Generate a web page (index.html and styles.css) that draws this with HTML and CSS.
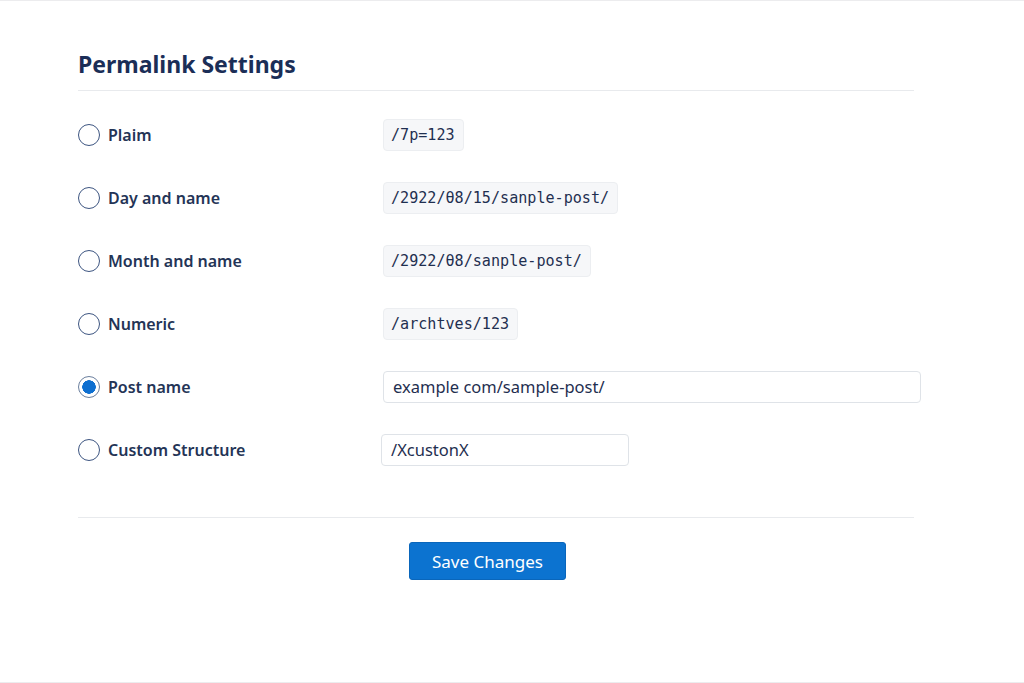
FILE: index.html
```html
<!DOCTYPE html>
<html lang="en">
<head>
  <meta charset="UTF-8" />
  <meta name="viewport" content="width=device-width, initial-scale=1.0"/>
  <title>Permalink Settings</title>
  <link rel="stylesheet" href="styles.css">
</head>
<body>
  <div class="page">
    <h1>Permalink Settings</h1>

    <div class="options">
      <label class="row">
        <span class="opt"><input type="radio" name="structure"> Plaim</span>
        <code>/7p=123</code>
      </label>
      <label class="row">
        <span class="opt"><input type="radio" name="structure"> Day and name</span>
        <code>/2922/θ8/15/sanple-post/</code>
      </label>
      <label class="row">
        <span class="opt"><input type="radio" name="structure"> Month and name</span>
        <code>/2922/θ8/sanple-post/</code>
      </label>
      <label class="row">
        <span class="opt"><input type="radio" name="structure"> Numeric</span>
        <code>/archtves/123</code>
      </label>
      <label class="row">
        <span class="opt"><input type="radio" name="structure" checked> Post name</span>
        <input type="text" class="field wide" value="example com/sample-post/">
      </label>
      <label class="row">
        <span class="opt"><input type="radio" name="structure"> Custom Structure</span>
        <input type="text" class="field short" value="/XcustonX">
      </label>
    </div>

    <div class="actions">
      <button>Save Changes</button>
    </div>
  </div>
</body>
</html>
```

FILE: styles.css
```css
html, body {
  margin: 0;
  height: 100%;
}

body {
  font-family: "Noto Sans", "Open Sans", sans-serif;
  background: #fff;
  color: #1f2f50;
  box-sizing: border-box;
  border-top: 1px solid #ececee;
  border-bottom: 1px solid #ececee;
}

.page {
  width: 836px;
  margin-left: 78px;
  padding-top: 47px;
}

h1 {
  font-size: 23px;
  font-weight: 700;
  color: #1b2e57;
  margin: 0;
  padding-bottom: 10px;
  border-bottom: 1px solid #e8eaed;
}

.options {
  padding-top: 12px;
  padding-bottom: 36px;
  border-bottom: 1px solid #e8eaed;
}

.row {
  display: grid;
  grid-template-columns: 305px 1fr;
  align-items: center;
  height: 63px;
}

.opt {
  display: flex;
  align-items: center;
  gap: 8px;
  font-size: 16px;
  font-weight: 600;
  color: #243456;
}

input[type="radio"] {
  appearance: none;
  width: 22px;
  height: 22px;
  margin: 0;
  border: 1.5px solid #3d5581;
  border-radius: 50%;
  background: #fff;
  box-sizing: border-box;
}

input[type="radio"]:checked {
  border-color: #6b7f9e;
  background: radial-gradient(circle, #0e6fd0 0 6.5px, #fff 7px);
}

code {
  justify-self: start;
  font-family: "DejaVu Sans Mono", monospace;
  font-size: 15.1px;
  color: #1f2f50;
  background: #f6f7f9;
  border: 1px solid #eceef1;
  border-radius: 4px;
  padding: 6px 8px 6px 7px;
}

.field {
  font-family: inherit;
  font-size: 16.5px;
  color: #1f2f50;
  height: 32px;
  box-sizing: border-box;
  padding: 0 9px;
  border: 1px solid #dfe3e8;
  border-radius: 4px;
  background: #fff;
}

.wide {
  width: 538px;
}

.short {
  width: 248px;
  margin-left: -2px;
}

.actions {
  padding-top: 24px;
  padding-left: 331px;
}

button {
  width: 157px;
  height: 38px;
  font-family: inherit;
  font-size: 17px;
  color: #fff;
  background: #0c73d0;
  border: 1px solid #0a66bb;
  border-radius: 3px;
}
```
